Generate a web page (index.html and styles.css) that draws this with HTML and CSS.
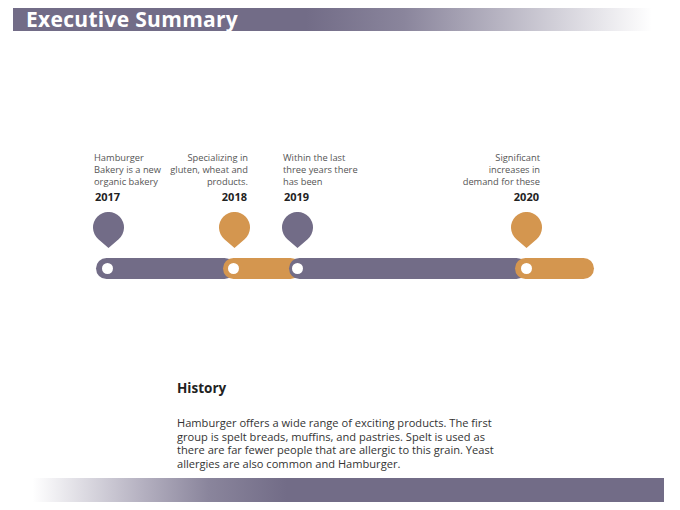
FILE: index.html
```html
<!DOCTYPE html>
<html lang="en">
<head>
<meta charset="utf-8">
<title>Executive Summary</title>
<link rel="stylesheet" href="styles.css">
</head>
<body>
<div class="slide">
  <header class="title-bar">
    <h1 class="title">Executive Summary</h1>
  </header>

  <section class="timeline">
    <div class="events">
      <div class="event event-a left">
        <p class="desc">Hamburger<br>Bakery is a new<br>organic bakery</p>
        <div class="year">2017</div>
        <svg class="pin" width="31" height="36" viewBox="0 0 31 36"><path d="M15.5 36 L5.35 27.2 A15.5 15.5 0 1 1 25.65 27.2 Z" fill="#726c87"/></svg>
      </div>
      <div class="event event-b right">
        <p class="desc">Specializing in<br>gluten, wheat and<br>products.</p>
        <div class="year">2018</div>
        <svg class="pin" width="31" height="36" viewBox="0 0 31 36"><path d="M15.5 36 L5.35 27.2 A15.5 15.5 0 1 1 25.65 27.2 Z" fill="#d4964f"/></svg>
      </div>
      <div class="event event-c left">
        <p class="desc">Within the last<br>three years there<br>has been</p>
        <div class="year">2019</div>
        <svg class="pin" width="31" height="36" viewBox="0 0 31 36"><path d="M15.5 36 L5.35 27.2 A15.5 15.5 0 1 1 25.65 27.2 Z" fill="#726c87"/></svg>
      </div>
      <div class="event event-d right">
        <p class="desc">Significant<br>increases in<br>demand for these</p>
        <div class="year">2020</div>
        <svg class="pin" width="31" height="36" viewBox="0 0 31 36"><path d="M15.5 36 L5.35 27.2 A15.5 15.5 0 1 1 25.65 27.2 Z" fill="#d4964f"/></svg>
      </div>
    </div>
    <div class="track">
      <div class="seg seg-1 purple"><span class="dot"></span></div>
      <div class="seg seg-2 orange"><span class="dot"></span></div>
      <div class="seg seg-3 purple"><span class="dot"></span></div>
      <div class="seg seg-4 orange"><span class="dot"></span></div>
    </div>
  </section>

  <section class="history">
    <h2 class="history-title">History</h2>
    <p class="history-text">Hamburger offers a wide range of exciting products. The first<br>group is spelt breads, muffins, and pastries. Spelt is used as<br>there are far fewer people that are allergic to this grain. Yeast<br>allergies are also common and Hamburger.</p>
  </section>

  <footer class="bottom-bar"></footer>
</div>
</body>
</html>
```

FILE: styles.css
```css
* { box-sizing: border-box; }

html, body {
  margin: 0;
  padding: 0;
  background: #ffffff;
}

.slide {
  width: 680px;
  height: 510px;
  padding-top: 8px;
  font-family: "Open Sans", "Noto Sans", sans-serif;
  color: #333;
  overflow: hidden;
}

.title-bar {
  margin-left: 13px;
  width: 652px;
  height: 23px;
  background: linear-gradient(to right, #726c87 0%, #726c87 45%, #8a859c 60%, #ffffff 98%);
  display: flex;
  align-items: center;
  padding-left: 13px;
}

.title {
  margin: 0;
  font-size: 21px;
  font-weight: 700;
  color: #ffffff;
  line-height: 23px;
  letter-spacing: 0.3px;
}

.timeline {
  margin-top: 121px;
}

.events {
  display: flex;
  padding-left: 93px;
  align-items: flex-end;
}

.event {
  display: flex;
  flex-direction: column;
}

.event.left { align-items: flex-start; text-align: left; }
.event.right { align-items: flex-end; text-align: right; }

.event-a { width: 74px; }
.event-b { width: 84px; margin-left: -1px; }
.event-c { width: 80px; margin-left: 32px; }
.event-d { width: 84px; margin-left: 96px; }

.desc {
  margin: 0 0 0 1px;
  font-size: 9.3px;
  line-height: 12px;
  color: #555;
  white-space: nowrap;
}

.event.right .desc { margin: 0 2px 0 0; }

.year {
  margin: 2px 0 0 2px;
  font-size: 11px;
  font-weight: 700;
  line-height: 14px;
  color: #222;
}

.event.right .year { margin: 2px 3px 0 0; }

.pin {
  display: block;
  margin-top: 8px;
}

.track {
  display: flex;
  margin-top: 10px;
  padding-left: 96px;
  height: 21px;
}

.seg {
  height: 21px;
  border-radius: 11px;
  display: flex;
  align-items: center;
  padding-left: 6px;
}

.purple { background: #726c87; }
.orange { background: #d4964f; }

.seg-1 { width: 139px; }
.seg-2 { width: 78px; margin-left: -12px; padding-left: 5px; }
.seg-3 { width: 238px; margin-left: -12px; padding-left: 3px; }
.seg-4 { width: 79px; margin-left: -12px; padding-left: 6px; }

.dot {
  width: 11px;
  height: 11px;
  border-radius: 50%;
  background: #ffffff;
}

.history {
  margin-top: 100px;
  padding-left: 177px;
  width: 540px;
}

.history-title {
  margin: 0;
  font-size: 13.5px;
  font-weight: 700;
  line-height: 18px;
  color: #222;
}

.history-text {
  margin: 19px 0 0 0;
  font-size: 11.1px;
  line-height: 13.7px;
  color: #333;
  white-space: nowrap;
}

.bottom-bar {
  margin-top: 7px;
  margin-left: 13px;
  width: 651px;
  height: 24px;
  background: linear-gradient(to right, #ffffff 0%, #ffffff 3%, #b4b0c0 20%, #8a859c 30%, #726c87 42%, #726c87 100%);
}
```
